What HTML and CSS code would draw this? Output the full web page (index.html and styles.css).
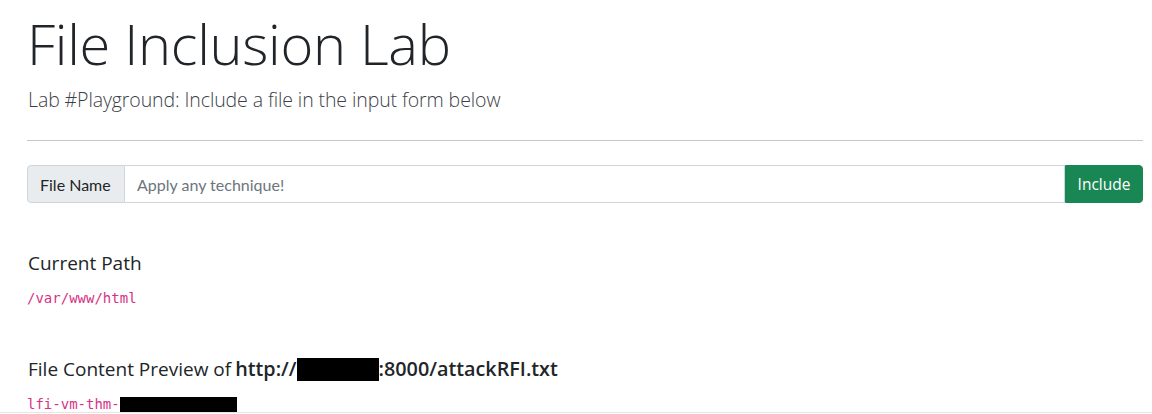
FILE: index.html
```html
<!DOCTYPE html>
<html lang="en">
<head>
<meta charset="utf-8">
<title>File Inclusion Lab</title>
<link rel="stylesheet" href="styles.css">
</head>
<body>
<main class="page">
  <h1 class="title">File Inclusion Lab</h1>
  <p class="lead">Lab #Playground: Include a file in the input form below</p>
  <hr class="rule">
  <form class="input-group">
    <span class="addon">File Name</span>
    <input class="field" type="text" placeholder="Apply any technique!">
    <button class="btn" type="button">Include</button>
  </form>
  <section class="block block-path">
    <h5 class="heading">Current Path</h5>
    <code class="code">/var/www/html</code>
  </section>
  <section class="block block-preview">
    <h5 class="heading">File Content Preview of <b class="url">http://<span class="redact redact-host"></span>:8000/attackRFI.txt</b></h5>
    <code class="code">lfi-vm-thm-<span class="redact redact-id"></span></code>
  </section>
</main>
<div class="footer-line"></div>
</body>
</html>
```

FILE: styles.css
```css
* { box-sizing: border-box; }
html, body { margin: 0; padding: 0; background: #fff; }
body {
  font-family: "Open Sans", sans-serif;
  color: #212529;
  height: 414px;
  overflow: hidden;
}
.page {
  padding: 0 9px 0 27px;
  display: flex;
  flex-direction: column;
}
.title {
  margin: 10px 0 0 0;
  font-size: 56px;
  font-weight: 300;
  line-height: 67px;
  letter-spacing: -0.3px;
}
.lead {
  margin: 8px 0 0 1px;
  font-size: 19.5px;
  font-weight: 300;
  line-height: 30px;
  letter-spacing: -0.1px;
  color: #3d4147;
}
.rule {
  margin: 25px 0 0 0;
  border: 0;
  border-top: 1px solid #c6c7c8;
  height: 0;
}
.input-group {
  margin-top: 24px;
  display: flex;
  height: 38px;
  font-family: "Lato", sans-serif;
  font-size: 16px;
}
.addon {
  display: flex;
  align-items: center;
  padding: 0 12px;
  background: #e9ecef;
  border: 1px solid #ced4da;
  border-radius: 4px 0 0 4px;
  color: #212529;
  width: 98px;
}
.field {
  flex: 1;
  border: 1px solid #ced4da;
  border-left: 0;
  padding: 0 12px;
  font-family: "Lato", sans-serif;
  font-size: 16px;
  color: #212529;
  outline: none;
}
.field::placeholder { color: #6c757d; }
.btn {
  width: 78px;
  background: #198754;
  border: 1px solid #198754;
  color: #fff;
  border-radius: 0 4px 4px 0;
  font-family: "Open Sans", sans-serif;
  font-size: 15.5px;
  padding: 0;
}
.block {
  display: flex;
  flex-direction: column;
  align-items: flex-start;
}
.block-path { margin-top: 48px; }
.block-preview { margin-top: 48px; }
.heading {
  margin: 0 0 0 1px;
  font-size: 19px;
  font-weight: 400;
  line-height: 24px;
  display: flex;
  align-items: center;
}
.url {
  font-size: 19.8px;
  font-weight: 600;
  display: inline-flex;
  align-items: center;
  margin-left: 4px;
}
.code {
  margin-top: 13px;
  font-family: "DejaVu Sans Mono", monospace;
  font-size: 14px;
  line-height: 21px;
  color: #d63384;
  display: flex;
  align-items: center;
}
.redact {
  display: inline-block;
  background: #000;
}
.redact-host { width: 82px; height: 23px; }
.redact-id { width: 117px; height: 16px; }
.footer-line {
  position: absolute;
  left: 0;
  right: 0;
  top: 412px;
  border-top: 1px solid #e6e6e6;
}
```
